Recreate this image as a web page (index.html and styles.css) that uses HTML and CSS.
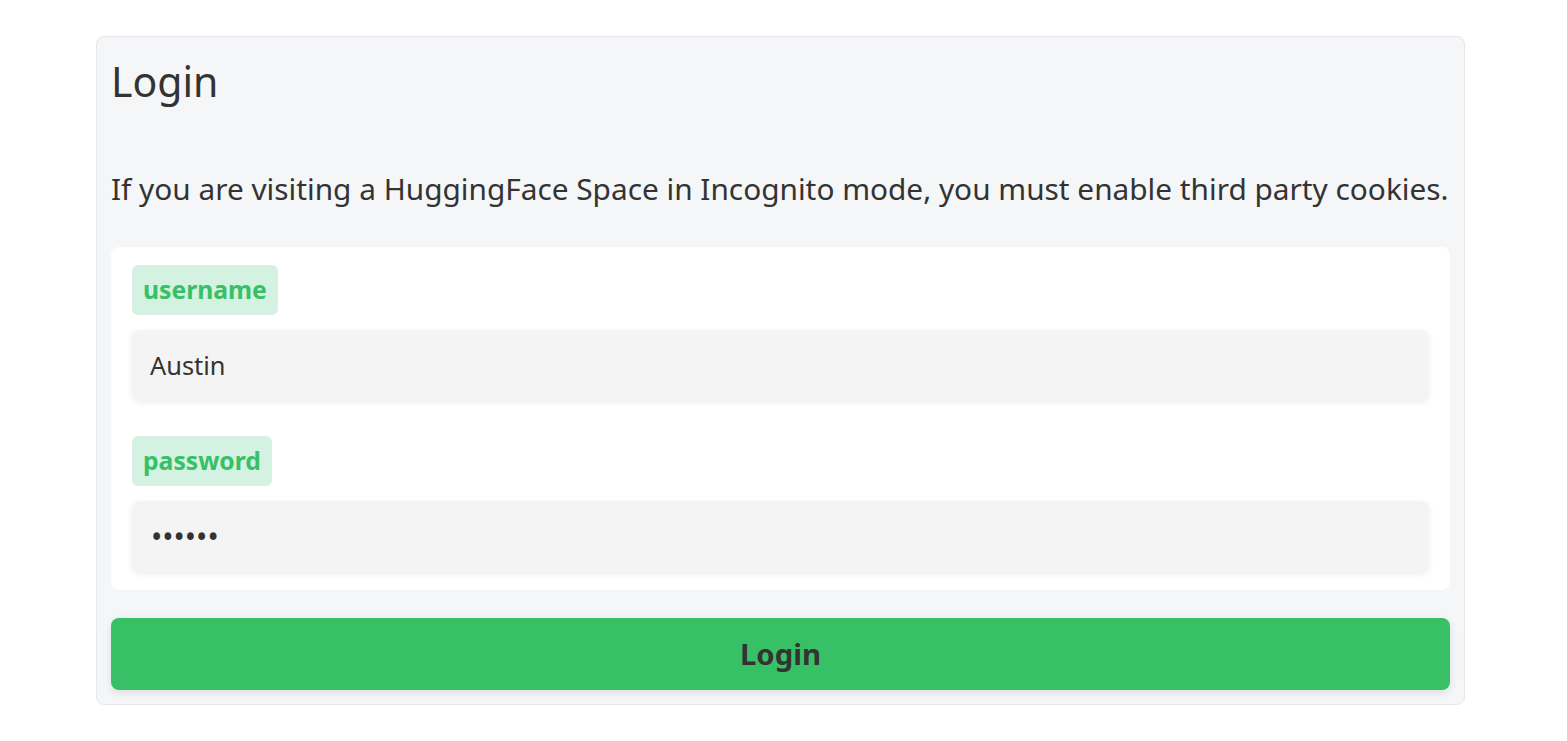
FILE: index.html
```html
<!DOCTYPE html>
<html>
<head>
<meta charset="utf-8">
<link rel="stylesheet" href="styles.css">
</head>
<body>
<div class="page">
  <div class="card">
    <h1 class="title">Login</h1>
    <p class="note">If you are visiting a HuggingFace Space in Incognito mode, you must enable third party cookies.</p>
    <div class="form">
      <div class="field">
        <span class="badge">username</span>
        <div class="input">Austin</div>
      </div>
      <div class="field">
        <span class="badge">password</span>
        <div class="input dots">••••••</div>
      </div>
    </div>
    <button class="btn">Login</button>
  </div>
</div>
</body>
</html>
```
FILE: styles.css
```css
html, body {
  margin: 0;
  padding: 0;
  background: #ffffff;
}
body {
  font-family: "Noto Sans", "Open Sans", sans-serif;
  color: #333333;
}
.page {
  padding: 36px 102px 0 96px;
}
.card {
  background: #f5f6f8;
  border: 1px solid #e5e7eb;
  border-radius: 8px;
  padding: 14px;
  display: flex;
  flex-direction: column;
}
.title {
  margin: 0;
  font-size: 41px;
  font-weight: 400;
  line-height: 60px;
  color: #333;
}
.note {
  margin: 58px 0 0 0;
  font-size: 29.8px;
  line-height: 40px;
  white-space: nowrap;
}
.form {
  margin-top: 38px;
  background: #ffffff;
  border-radius: 8px;
  padding: 18px 21px;
  display: flex;
  flex-direction: column;
  gap: 36px;
}
.field {
  display: flex;
  flex-direction: column;
  align-items: flex-start;
  gap: 15px;
}
.badge {
  background: #d3f2e2;
  color: #37c065;
  font-weight: 700;
  font-size: 24.7px;
  line-height: 50px;
  height: 50px;
  padding: 0 11px;
  border-radius: 6px;
}
.input {
  align-self: stretch;
  background: #f4f4f4;
  border-radius: 8px;
  height: 70px;
  display: flex;
  align-items: center;
  padding: 0 18px;
  font-size: 25.4px;
  box-shadow: 0 2px 6px rgba(0, 0, 0, 0.08);
}
.input.dots {
  height: 71px;
  font-size: 30px;
  padding-left: 19px;
}
.btn {
  margin-top: 28px;
  height: 72px;
  border: none;
  border-radius: 8px;
  background: #38c066;
  color: #333;
  font-family: inherit;
  font-weight: 700;
  font-size: 29.3px;
  box-shadow: 0 3px 8px rgba(0, 0, 0, 0.1);
}
```
